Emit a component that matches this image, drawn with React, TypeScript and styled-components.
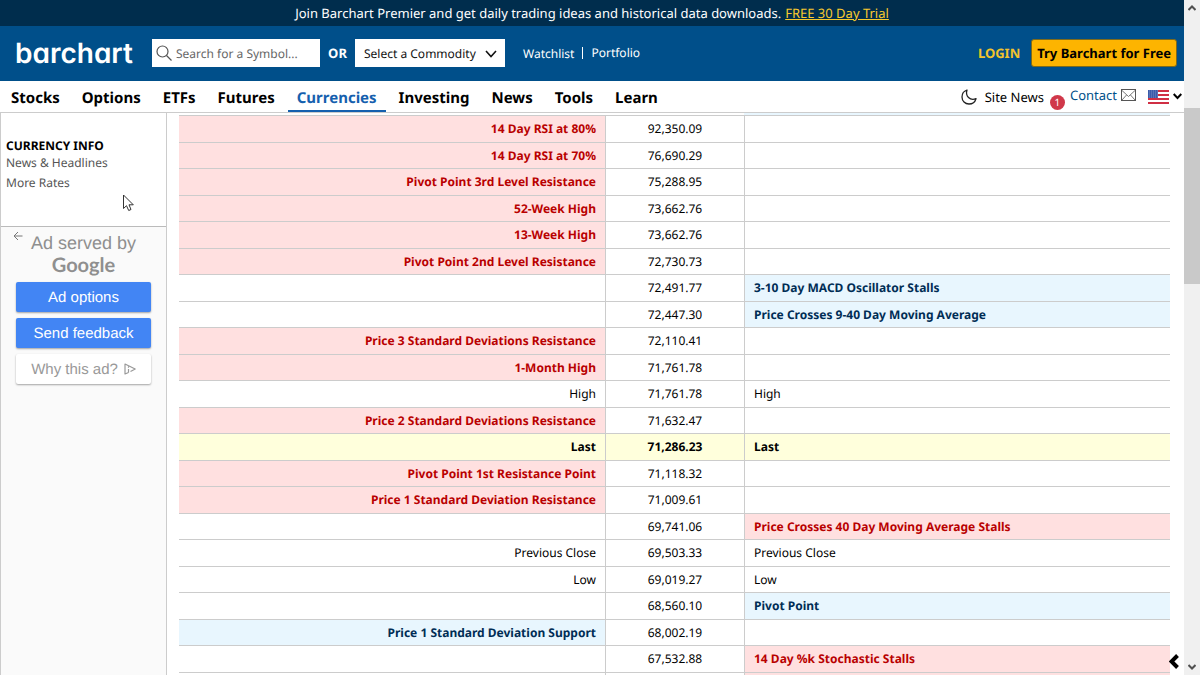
import React from 'react';
import styled, { createGlobalStyle, css } from 'styled-components';

const sans = `'Noto Sans', 'Open Sans', sans-serif`;
const arial = `'Liberation Sans', Arial, sans-serif`;

const GlobalStyle = createGlobalStyle`
  *, *::before, *::after { box-sizing: border-box; }
  body { margin: 0; background: #fff; color: #000; font-family: ${sans}; text-rendering: geometricPrecision; }
  a { color: inherit; text-decoration: none; }
  button, input, select { font-family: inherit; text-rendering: inherit; }
`;

const Screen = styled.div`
  display: flex;
  height: 100vh;
  overflow: hidden;
`;

const Page = styled.div`
  flex: 1;
  min-width: 0;
  display: flex;
  flex-direction: column;
`;

const Promo = styled.div`
  flex: none;
  height: 26px;
  background: #002d4d;
  color: #fff;
  font-size: 13px;
  line-height: 26px;
  text-align: center;
  white-space: nowrap;

  a { color: #f7c92f; text-decoration: underline; margin-left: 4px; }
`;

const Header = styled.header`
  flex: none;
  display: flex;
  align-items: center;
  height: 55px;
  padding: 0 7px 1px 15px;
  background: #004f8a;
  color: #fff;
  white-space: nowrap;
`;

const Logo = styled.a`
  width: 137px;
  font-family: Inter, sans-serif;
  font-size: 28px;
  font-weight: 600;
  line-height: 36px;
  font-feature-settings: 'cv11';
`;

const SearchBox = styled.label`
  display: flex;
  align-items: center;
  gap: 4px;
  width: 168px;
  height: 28px;
  padding-left: 4px;
  background: #fff;

  input {
    flex: 1;
    min-width: 0;
    padding: 0;
    border: 0;
    outline: 0;
    background: none;
    font-size: 12px;
  }
  input::placeholder { color: #666; opacity: 1; }
`;

const Or = styled.span`
  width: 35px;
  text-align: center;
  font-size: 13px;
  font-weight: 700;
`;

const Picker = styled.label`
  position: relative;
  width: 150px;

  select {
    appearance: none;
    display: block;
    width: 100%;
    height: 28px;
    padding: 0 24px 0 9px;
    border: 0;
    border-radius: 0;
    background: #fff;
    color: #111;
    font-size: 12px;
  }
  svg { position: absolute; right: 8px; top: 11px; pointer-events: none; }
`;

const QuickLinks = styled.div`
  display: flex;
  align-items: center;
  margin-left: 18px;
  font-size: 12px;

  a + a { margin-left: 8px; padding-left: 8px; border-left: 1px solid #fff; line-height: 12px; }
`;

const Account = styled.div`
  display: flex;
  align-items: center;
  gap: 11px;
  margin-left: auto;
`;

const Login = styled.a`
  color: #f2c32c;
  font-size: 13px;
  font-weight: 700;
`;

const TryButton = styled.button`
  height: 28px;
  padding: 0 5px;
  border: 1px solid #7d6a1c;
  border-radius: 3px;
  background: #fdb400;
  color: #000;
  font-size: 13px;
  font-weight: 700;
`;

const NavBar = styled.nav`
  flex: none;
  display: flex;
  align-items: center;
  height: 32px;
  padding-left: 2px;
  border-bottom: 1px solid #ccc;
  white-space: nowrap;
`;

const NavLink = styled.a<{ $active?: boolean }>`
  height: 31px;
  margin-right: 4px;
  padding: 0 9px;
  border-bottom: 2px solid ${p => (p.$active ? '#1560ae' : 'transparent')};
  color: ${p => (p.$active ? '#1560ae' : '#000')};
  font-size: 15px;
  font-weight: 700;
  line-height: 34px;
`;

const NavTools = styled.div`
  display: flex;
  align-items: center;
  margin-left: auto;
  font-size: 13px;
`;

const Theme = styled.button`
  display: flex;
  margin-right: 8px;
  padding: 0;
  border: 0;
  background: none;
`;

const Count = styled.span`
  align-self: flex-end;
  width: 15px;
  height: 15px;
  margin: 0 5px 0 6px;
  border-radius: 50%;
  background: #d0384a;
  color: #fff;
  font-size: 10px;
  line-height: 15px;
  text-align: center;
  transform: translateY(3px);
`;

const Contact = styled.a`
  display: flex;
  align-items: center;
  gap: 4px;
  padding-bottom: 3px;
  color: #004f8a;
`;

const Language = styled.button`
  display: flex;
  align-items: center;
  gap: 4px;
  margin-left: 12px;
  padding: 0 2px 0 0;
  border: 0;
  background: none;
`;

const Body = styled.div`
  flex: 1;
  min-height: 0;
  display: flex;
`;

const Sidebar = styled.aside`
  flex: none;
  display: flex;
  flex-direction: column;
  width: 167px;
  border: solid #ccc;
  border-width: 0 1px;
`;

const SideMenu = styled.div`
  height: 113px;
  padding: 25px 5px 0;
  color: #555;
  font-size: 12px;
  line-height: 20px;

  h2 { margin: 0; color: #000; font-size: 12px; line-height: 15px; }
  a { display: block; }
`;

const AdPanel = styled.div`
  flex: 1;
  position: relative;
  display: flex;
  flex-direction: column;
  gap: 6px;
  padding: 6px 15px 0;
  border-top: 1px solid #bbb;
  background: #fafafa;
  font-family: ${arial};
`;

const AdBack = styled.button`
  position: absolute;
  left: 12px;
  top: 4px;
  display: flex;
  padding: 0;
  border: 0;
  background: none;
`;

const AdTitle = styled.div`
  height: 43px;
  color: #8f8f8f;
  font-size: 18px;
  line-height: 20px;
  text-align: center;

  strong {
    display: block;
    font-family: Lato, sans-serif;
    font-size: 20px;
    font-weight: 700;
    line-height: 24px;
  }
`;

const AdButton = styled.button<{ $plain?: boolean }>`
  display: flex;
  align-items: center;
  justify-content: center;
  gap: 6px;
  height: 30px;
  padding: 0;
  border: 0;
  border-radius: 2px;
  background: ${p => (p.$plain ? '#fff' : '#4285f4')};
  color: ${p => (p.$plain ? '#999' : '#fff')};
  box-shadow: 0 1px 2px rgba(0, 0, 0, 0.35);
  font-size: 15px;
`;

const Main = styled.main`
  flex: 1;
  min-width: 0;
  padding: 0 14px 0 12px;
  overflow: hidden;
`;

const Levels = styled.table`
  width: 100%;
  border-collapse: separate;
  border-spacing: 0;
  table-layout: fixed;
  font-size: 12px;
  line-height: 18px;

  th, td { padding: 0 9px; }
  tr { height: 26px; }
  tr:nth-child(odd) { height: 27px; }
  thead tr:first-child { height: 3px; }
`;

type Tone = 'red' | 'blue' | 'last' | 'plain';

const tones = {
  red: css`background: #ffe0e0; color: #b90000; font-weight: 700;`,
  blue: css`background: #e8f6fe; color: #002d55; font-weight: 700;`,
  last: css`background: #ffffdc; font-weight: 700;`,
  plain: css`font-weight: 400;`,
};

const Cell = styled.td<{ $tone: Tone; $align?: string }>`
  border-bottom: 1px solid #ccc;
  text-align: ${p => p.$align || 'left'};
  ${p => tones[p.$tone]}

  & + & { border-left: 1px solid #ccc; }
`;

const TopCell = styled.th<{ $blue?: boolean }>`
  border-bottom: 1px solid #ccc;
  background: ${p => (p.$blue ? '#e8f6fe' : '#fff')};
`;

const Scrollbar = styled.div`
  flex: none;
  display: flex;
  flex-direction: column;
  align-items: center;
  justify-content: space-between;
  width: 16px;
  padding: 5px 0;
  background: linear-gradient(#c9c9c9, #c9c9c9) 0 108px / 16px 176px no-repeat #f0f0f0;
`;

const PanelToggle = styled.button`
  position: fixed;
  right: 21px;
  bottom: 6px;
  display: flex;
  padding: 0;
  border: 0;
  background: none;
`;

const Pointer = styled.svg`
  position: fixed;
  left: 122px;
  top: 194px;
`;

type Row = [string, Tone, string, string, Tone];

const rows: Row[] = [
  ['14 Day RSI at 80%', 'red', '92,350.09', '', 'plain'],
  ['14 Day RSI at 70%', 'red', '76,690.29', '', 'plain'],
  ['Pivot Point 3rd Level Resistance', 'red', '75,288.95', '', 'plain'],
  ['52-Week High', 'red', '73,662.76', '', 'plain'],
  ['13-Week High', 'red', '73,662.76', '', 'plain'],
  ['Pivot Point 2nd Level Resistance', 'red', '72,730.73', '', 'plain'],
  ['', 'plain', '72,491.77', '3-10 Day MACD Oscillator Stalls', 'blue'],
  ['', 'plain', '72,447.30', 'Price Crosses 9-40 Day Moving Average', 'blue'],
  ['Price 3 Standard Deviations Resistance', 'red', '72,110.41', '', 'plain'],
  ['1-Month High', 'red', '71,761.78', '', 'plain'],
  ['High', 'plain', '71,761.78', 'High', 'plain'],
  ['Price 2 Standard Deviations Resistance', 'red', '71,632.47', '', 'plain'],
  ['Last', 'last', '71,286.23', 'Last', 'last'],
  ['Pivot Point 1st Resistance Point', 'red', '71,118.32', '', 'plain'],
  ['Price 1 Standard Deviation Resistance', 'red', '71,009.61', '', 'plain'],
  ['', 'plain', '69,741.06', 'Price Crosses 40 Day Moving Average Stalls', 'red'],
  ['Previous Close', 'plain', '69,503.33', 'Previous Close', 'plain'],
  ['Low', 'plain', '69,019.27', 'Low', 'plain'],
  ['', 'plain', '68,560.10', 'Pivot Point', 'blue'],
  ['Price 1 Standard Deviation Support', 'blue', '68,002.19', '', 'plain'],
  ['', 'plain', '67,532.88', '14 Day %k Stochastic Stalls', 'red'],
  ['', 'plain', '', '', 'red'],
];

const sections = ['Stocks', 'Options', 'ETFs', 'Futures', 'Currencies', 'Investing', 'News', 'Tools', 'Learn'];

const Flag = () => (
  <svg width="21" height="14" viewBox="0 0 21 14">
    <rect width="21" height="14" fill="#fff" />
    {[0, 4, 8, 12].map(y => (
      <rect key={y} y={y} width="21" height="2" fill="#d02f44" />
    ))}
    <rect width="10" height="8" fill="#3b5ba9" />
    {[1, 3, 5, 7].map(y => (
      <path key={y} d={`M1 ${y}H10`} stroke="#9db0dc" strokeWidth="0.6" strokeDasharray="1 1" />
    ))}
  </svg>
);

export default function App() {
  return (
    <Screen>
      <GlobalStyle />
      <Page>
        <Promo>
          Join Barchart Premier and get daily trading ideas and historical data downloads.
          <a href="#trial">FREE 30 Day Trial</a>
        </Promo>
        <Header>
          <Logo href="#home">barchart</Logo>
          <SearchBox>
            <svg width="16" height="16" viewBox="0 0 16 16" fill="none" stroke="#555" strokeWidth="1.2">
              <circle cx="6.5" cy="6.5" r="5.5" />
              <path d="M10.5 10.5L15.5 15.5" />
            </svg>
            <input aria-label="Search for a Symbol" placeholder="Search for a Symbol..." />
          </SearchBox>
          <Or>OR</Or>
          <Picker>
            <select aria-label="Commodity">
              <option>Select a Commodity</option>
            </select>
            <svg width="12" height="8" viewBox="0 0 12 8" fill="none" stroke="#111" strokeWidth="1.6">
              <path d="M1 1L6 6.5L11 1" />
            </svg>
          </Picker>
          <QuickLinks>
            <a href="#watchlist">Watchlist</a>
            <a href="#portfolio">Portfolio</a>
          </QuickLinks>
          <Account>
            <Login href="#login">LOGIN</Login>
            <TryButton>Try Barchart for Free</TryButton>
          </Account>
        </Header>
        <NavBar>
          {sections.map(name => (
            <NavLink key={name} href={`#${name}`} $active={name === 'Currencies'}>
              {name}
            </NavLink>
          ))}
          <NavTools>
            <Theme aria-label="Dark mode">
              <svg width="16" height="16" viewBox="0 0 16 16" fill="none" stroke="#222" strokeWidth="1.3" strokeLinejoin="round">
                <path d="M6 1C3 2 1 4.7 1 8C1 12 4 15 8 15C11.5 15 14 13 15 9.7C12 11 9.500 10.500 7.500 8.500C5.500 6.500 5 4 6 1Z" />
              </svg>
            </Theme>
            <a href="#site-news">Site News</a>
            <Count>1</Count>
            <Contact href="#contact">
              Contact
              <svg width="15" height="12" viewBox="0 0 15 12" fill="none" stroke="#555">
                <rect x="0.5" y="0.5" width="14" height="11" />
                <path d="M1 1.5L7.5 7.5L14 1.5M1 11L5.5 6M14 11L9.5 6" strokeWidth="0.8" />
              </svg>
            </Contact>
            <Language aria-label="Language">
              <Flag />
              <svg width="9" height="7" viewBox="0 0 9 7" fill="none" stroke="#000" strokeWidth="2">
                <path d="M0.7 1L4.5 5L8.3 1" />
              </svg>
            </Language>
          </NavTools>
        </NavBar>
        <Body>
          <Sidebar>
            <SideMenu>
              <h2>CURRENCY INFO</h2>
              <a href="#headlines">News &amp; Headlines</a>
              <a href="#rates">More Rates</a>
            </SideMenu>
            <AdPanel>
              <AdBack aria-label="Back">
                <svg width="10" height="10" viewBox="0 0 10 10" fill="none" stroke="#777">
                  <path d="M9.5 5H1M5 1L1 5L5 9" />
                </svg>
              </AdBack>
              <AdTitle>
                Ad served by <strong>Google</strong>
              </AdTitle>
              <AdButton>Ad options</AdButton>
              <AdButton>Send feedback</AdButton>
              <AdButton $plain>
                Why this ad?
                <svg width="12" height="12" viewBox="0 0 12 12" fill="none" stroke="#999" strokeWidth="1.2" strokeLinejoin="round">
                  <path d="M4.500 9.500L1 11V1L11.200 6L6.500 8.500M4.500 3.500V4.700M4.500 6V9.500" />
                </svg>
              </AdButton>
            </AdPanel>
          </Sidebar>
          <Main>
            <Levels>
              <colgroup>
                <col />
                <col width="139" />
                <col />
              </colgroup>
              <thead>
                <tr>
                  <TopCell aria-label="Support and resistance" />
                  <TopCell aria-label="Price" />
                  <TopCell $blue aria-label="Key turning points" />
                </tr>
              </thead>
              <tbody>
                {rows.map(([left, leftTone, price, right, rightTone], i) => (
                  <tr key={i}>
                    <Cell $tone={leftTone} $align="right">{left}</Cell>
                    <Cell $tone={leftTone === 'last' ? 'last' : 'plain'} $align="center">{price}</Cell>
                    <Cell $tone={rightTone}>{right}</Cell>
                  </tr>
                ))}
              </tbody>
            </Levels>
          </Main>
        </Body>
      </Page>
      <Scrollbar>
        <svg width="8" height="6" viewBox="0 0 8 6" fill="none" stroke="#505050" strokeWidth="2">
          <path d="M0.5 5L4 1.5L7.5 5" />
        </svg>
        <svg width="8" height="6" viewBox="0 0 8 6" fill="none" stroke="#505050" strokeWidth="2">
          <path d="M0.5 1L4 4.5L7.5 1" />
        </svg>
      </Scrollbar>
      <PanelToggle aria-label="Open panel">
        <svg width="10" height="15" viewBox="0 0 10 15" fill="none" stroke="#000" strokeWidth="4">
          <path d="M8.5 1.5L2.5 7.5L8.5 13.5" />
        </svg>
      </PanelToggle>
      <Pointer width="12" height="18" viewBox="0 0 12 18" fill="#fff" stroke="#333">
        <path d="M1.5 1V14.5L4.5 11.7L6.7 16.5L9 15.5L7 10.8H11.3Z" />
      </Pointer>
    </Screen>
  );
}
